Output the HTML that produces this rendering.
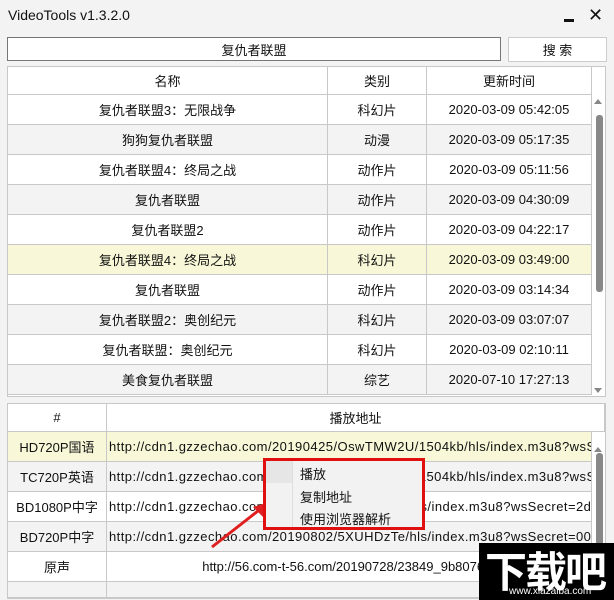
<!DOCTYPE html>
<html><head><meta charset="utf-8"><style>
*{margin:0;padding:0;box-sizing:border-box}
body{width:614px;height:600px;overflow:hidden;background:#f3f3f3;font-family:"Liberation Sans","Noto Sans CJK SC",sans-serif;font-size:13px;color:#111;position:relative}
.a{position:absolute}
.c{position:absolute;display:flex;align-items:center;justify-content:center;border-right:1px solid #c8c8c8;border-bottom:1px solid #c8c8c8;white-space:nowrap;overflow:hidden}
.m{letter-spacing:0.45px}
</style></head><body>
<div class="a" style="left:8px;top:7px;font-size:14px">VideoTools v1.3.2.0</div>
<div class="a" style="left:564px;top:19px;width:10px;height:3px;background:#111"></div>
<div class="a" style="left:588px;top:5px;font-size:18px">✕</div>
<div class="a" style="left:7px;top:37px;width:494px;height:24px;border:1px solid #777;background:#fff;display:flex;align-items:center;justify-content:center">复仇者联盟</div>
<div class="a" style="left:508px;top:37px;width:99px;height:25px;border:1px solid #ccc;background:#fff;display:flex;align-items:center;justify-content:center">搜 索</div>
<div class="a" style="left:7px;top:66px;width:599px;height:331px;border:1px solid #c8c8c8;background:#fff"></div>
<div id="t1"></div>
<div class="a" style="left:7px;top:403px;width:599px;height:196px;border:1px solid #c8c8c8;background:#fff"></div>
<div id="t2"></div>
<div class="a" style="left:592px;top:95px;width:13px;height:301px;background:#fff"></div>
<div class="a" style="left:596px;top:115px;width:7px;height:177px;background:#888;border-radius:3px"></div>
<div class="a" style="left:594px;top:99px;width:0;height:0;border:4px solid transparent;border-bottom:5px solid #888;border-top:0"></div>
<div class="a" style="left:594px;top:388px;width:0;height:0;border:4px solid transparent;border-top:5px solid #888;border-bottom:0"></div>
<div class="a" style="left:592px;top:432px;width:13px;height:166px;background:#fff"></div>
<div class="a" style="left:596px;top:453px;width:7px;height:140px;background:#888;border-radius:3px"></div>
<div class="a" style="left:594px;top:447px;width:0;height:0;border:4px solid transparent;border-bottom:5px solid #888;border-top:0"></div>
<svg class="a" style="left:205px;top:495px" width="70" height="60"><line x1="7" y1="52" x2="58" y2="12" stroke="#e02020" stroke-width="3"/><polygon points="64,7 48,12 58,22" fill="#e02020"/></svg>
<div class="a" style="left:263px;top:458px;width:162px;height:72px;border:3px solid #e01010;background:#f2f2f2">
<div class="a" style="left:26px;top:0;width:1px;height:66px;background:#ddd"></div>
<div class="a" style="left:0;top:0;width:26px;height:22px;background:#e6e6e6"></div>
<div class="a" style="left:34px;top:3px">播放</div>
<div class="a" style="left:34px;top:26px">复制地址</div>
<div class="a" style="left:34px;top:48px">使用浏览器解析</div>
</div>
<div class="a" style="left:479px;top:543px;width:135px;height:57px;background:#000;color:#fff">
<div class="a" style="left:6px;top:-4px;font-size:42px;font-weight:bold;letter-spacing:-2px;font-family:'Noto Sans CJK SC',sans-serif">下载吧</div>
<div class="a" style="left:30px;top:43px;font-size:10px">www.xiazaiba.com</div>
</div>
<script>
var r=[["复仇者联盟3：无限战争","科幻片","2020-03-09 05:42:05"],["狗狗复仇者联盟","动漫","2020-03-09 05:17:35"],["复仇者联盟4：终局之战","动作片","2020-03-09 05:11:56"],["复仇者联盟","动作片","2020-03-09 04:30:09"],["复仇者联盟2","动作片","2020-03-09 04:22:17"],["复仇者联盟4：终局之战","科幻片","2020-03-09 03:49:00"],["复仇者联盟","动作片","2020-03-09 03:14:34"],["复仇者联盟2：奥创纪元","科幻片","2020-03-09 03:07:07"],["复仇者联盟：奥创纪元","科幻片","2020-03-09 02:10:11"],["美食复仇者联盟","综艺","2020-07-10 17:27:13"]];
var h='',cx=[[8,320],[328,99],[427,165]];
var hd=["名称","类别","更新时间"];
for(var j=0;j<3;j++)h+='<div class="c" style="left:'+cx[j][0]+'px;top:67px;width:'+cx[j][1]+'px;height:28px;background:#fff">'+hd[j]+'</div>';
for(var i=0;i<10;i++){var bg=i==5?'#f8f8d8':(i%2?'#f3f3f3':'#fff');for(var j=0;j<3;j++){var t=95+i*30,hh=Math.min(30,396-t);h+='<div class="c" style="left:'+cx[j][0]+'px;top:'+t+'px;width:'+cx[j][1]+'px;height:'+hh+'px;background:'+bg+'">'+r[i][j]+'</div>';}}
document.getElementById('t1').innerHTML=h;
var u=[["HD720P国语","http://cdn1.gzzechao.com/20190425/OswTMW2U/1504kb/hls/index.m3u8?wsSecret=",1],["TC720P英语","http://cdn1.gzzechao.com/20190425/OswTMW2U/1504kb/hls/index.m3u8?wsSecret=",1],["BD1080P中字","http://cdn1.gzzechao.com/20190802/5XUHDzTe/hls/index.m3u8?wsSecret=2d0357",1],["BD720P中字","http://cdn1.gzzechao.com/20190802/5XUHDzTe/hls/index.m3u8?wsSecret=0005f",1],["原声","http://56.com-t-56.com/20190728/23849_9b8076fd/index.m3u8",0]];
h='<div class="c" style="left:8px;top:404px;width:99px;height:28px;background:#fff">#</div><div class="c" style="left:107px;top:404px;width:498px;height:28px;background:#fff">播放地址</div>';
for(var i=0;i<6;i++){var t=432+i*30,bg=i==0?'#f8f8d8':(i%2?'#f3f3f3':'#fff');var a=u[i]||["",""," "];var hh=Math.min(30,598-t);
h+='<div class="c" style="left:8px;top:'+t+'px;width:99px;height:'+hh+'px;background:'+bg+'">'+a[0]+'</div>';
h+='<div class="c" style="left:107px;top:'+t+'px;width:485px;height:'+hh+'px;background:'+bg+';justify-content:'+(a[2]==1?'flex-start;padding-left:2px':'center;padding-left:70px')+'"><span class="'+(a[2]==1?'m':'')+'">'+a[1]+'</span></div>';}
document.getElementById('t2').innerHTML=h;
</script>
</body></html>
